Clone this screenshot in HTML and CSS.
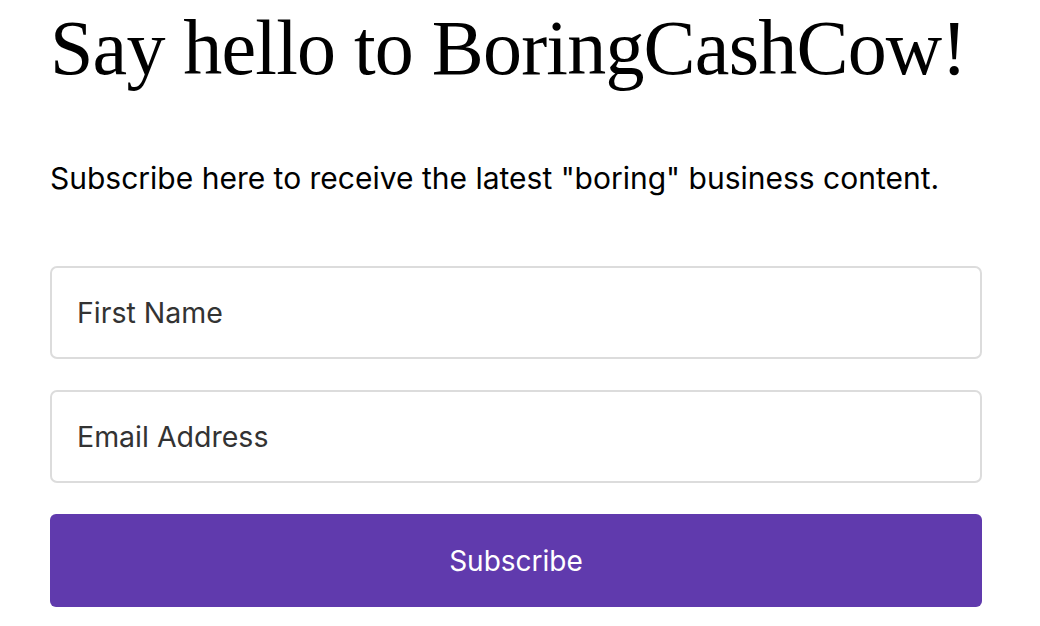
FILE: index.html
```html
<!DOCTYPE html>
<html>
<head>
<meta charset="utf-8">
<link rel="stylesheet" href="styles.css">
</head>
<body>
<div class="page">
  <h1 class="title">Say hello to BoringCashCow!</h1>
  <p class="lead">Subscribe here to receive the latest "boring" business content.</p>
  <form class="form">
    <input class="field" type="text" placeholder="First Name">
    <input class="field" type="email" placeholder="Email Address">
    <button class="btn" type="button">Subscribe</button>
  </form>
</div>
</body>
</html>
```
FILE: styles.css
```css
html, body {
  margin: 0;
  padding: 0;
  background: #fff;
}
.page {
  width: 932px;
  padding: 0 0 0 50px;
  display: flex;
  flex-direction: column;
}
.title {
  font-family: "Liberation Serif", serif;
  font-weight: 400;
  font-size: 78px;
  letter-spacing: -0.8px;
  line-height: 96px;
  margin: 0;
  color: #000;
  white-space: nowrap;
}
.lead {
  font-family: "Inter", sans-serif;
  font-size: 30px;
  line-height: 40px;
  margin: 62px 0 0 0;
  color: #000;
  white-space: nowrap;
}
.form {
  display: flex;
  flex-direction: column;
  gap: 31px;
  margin-top: 68px;
}
.field {
  box-sizing: border-box;
  height: 93px;
  width: 100%;
  border: 2px solid #dcdcdc;
  border-radius: 7px;
  padding: 0 25px;
  font-family: "Inter", sans-serif;
  font-size: 28.5px;
  color: #333;
  outline: none;
  background: #fff;
}
.field::placeholder {
  color: #333;
}
.btn {
  height: 93px;
  width: 100%;
  border: none;
  border-radius: 6px;
  background: #603aad;
  color: #fff;
  font-family: "Inter", sans-serif;
  font-size: 28px;
}
```
